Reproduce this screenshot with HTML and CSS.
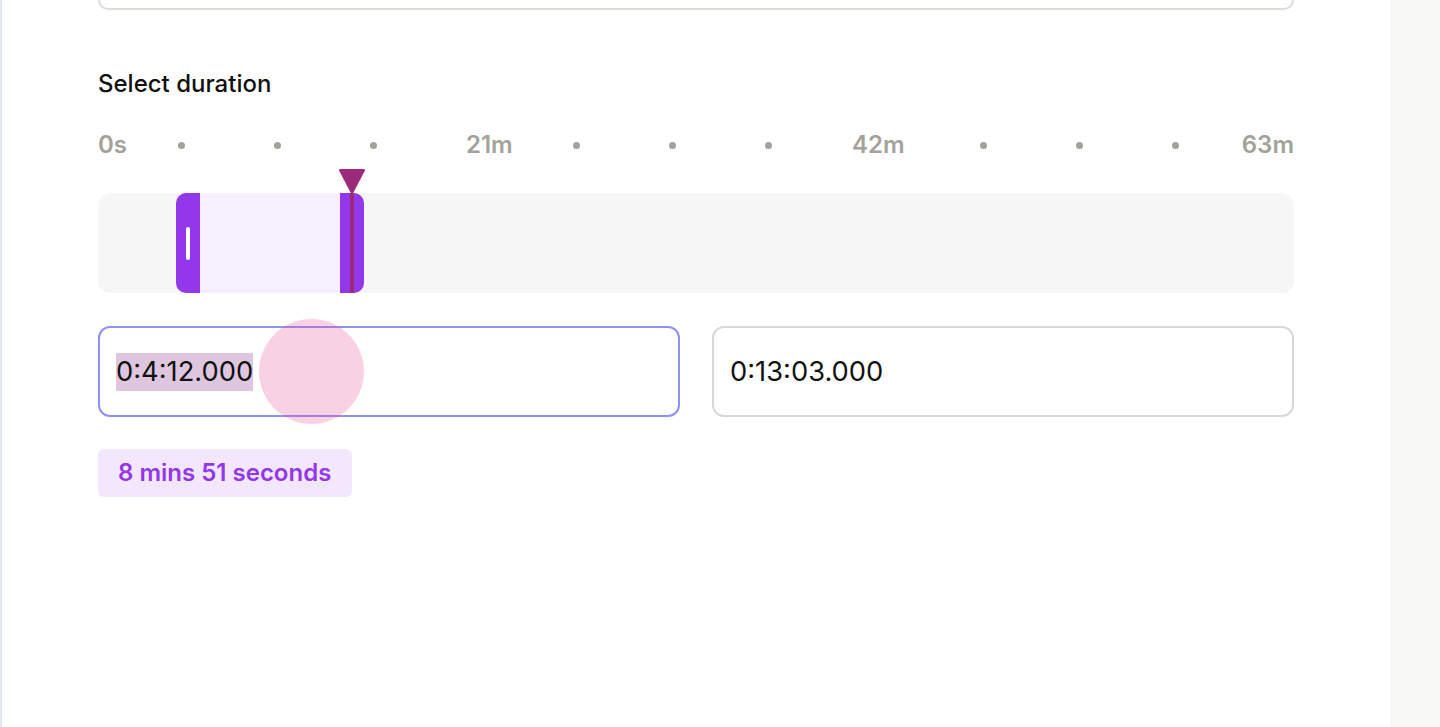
FILE: index.html
```html
<!DOCTYPE html>
<html>
<head>
<meta charset="utf-8">
<link rel="stylesheet" href="styles.css">
</head>
<body>
<div class="app">
  <div class="edge"></div>
  <main class="panel">
    <div class="prev-box"></div>
    <h2 class="title">Select duration</h2>
    <div class="ticks">
      <span class="lbl">0s</span>
      <span class="dot"></span>
      <span class="dot"></span>
      <span class="dot"></span>
      <span class="lbl">21m</span>
      <span class="dot"></span>
      <span class="dot"></span>
      <span class="dot"></span>
      <span class="lbl">42m</span>
      <span class="dot"></span>
      <span class="dot"></span>
      <span class="dot"></span>
      <span class="lbl end">63m</span>
    </div>
    <div class="track">
      <div class="range">
        <div class="handle left"><span class="grip"></span></div>
        <div class="fill"></div>
        <div class="handle right"></div>
      </div>
      <div class="playhead">
        <svg class="ph-head" width="30" height="28" viewBox="0 0 30 28"><path d="M3.5 1 H26.5 Q29 1 27.6 3.2 L16.2 25 Q15 27 13.8 25 L2.4 3.2 Q1 1 3.5 1 Z" fill="#9c2a7b"/></svg>
        <div class="ph-line"></div>
      </div>
    </div>
    <div class="inputs">
      <div class="field focused">
        <span class="val sel">0:4:12.000</span>
        <span class="touch"></span>
      </div>
      <div class="field">
        <span class="val">0:13:03.000</span>
      </div>
    </div>
    <div class="badge">8 mins 51 seconds</div>
  </main>
  <aside class="side"></aside>
</div>
</body>
</html>
```

FILE: styles.css
```css
* { box-sizing: border-box; }
html, body { margin: 0; padding: 0; height: 100%; }
body {
  font-family: Inter, "Noto Sans", sans-serif;
  background: #ffffff;
  overflow: hidden;
}
.app {
  display: flex;
  height: 727px;
}
.edge {
  width: 2px;
  background: #dfe6f2;
  flex: none;
}
.panel {
  width: 1388px;
  flex: none;
  background: #fff;
  padding: 0 96px;
}
.side {
  flex: 1;
  background: #f8f8f7;
}
.prev-box {
  height: 10px;
  border: 2px solid #dcdcd6;
  border-top: none;
  border-radius: 0 0 12px 12px;
}
.title {
  margin: 60px 0 0;
  font-size: 24px;
  line-height: 28px;
  font-weight: 500;
  color: #111;
  letter-spacing: 0;
}
.ticks {
  margin-top: 35px;
  display: grid;
  grid-template-columns: 80px 96px 96px 96px 107px 96px 96px 87px 128px 96px 96px 71px 51px;
  align-items: center;
  height: 24px;
}
.lbl {
  font-size: 24px;
  font-weight: 600;
  color: #a2a29b;
  line-height: 24px;
  white-space: nowrap;
}
.lbl.end { justify-self: end; }
.dot {
  width: 7px;
  height: 7px;
  border-radius: 50%;
  background: #a2a29b;
}
.track {
  position: relative;
  margin-top: 36px;
  height: 100px;
  background: #f6f6f6;
  border-radius: 12px;
}
.range {
  position: absolute;
  left: 78px;
  top: 0;
  width: 188px;
  height: 100px;
  display: flex;
}
.handle {
  width: 24px;
  background: #9337ea;
  flex: none;
  display: flex;
  align-items: center;
}
.handle.left { border-radius: 10px 0 0 10px; }
.handle.right { border-radius: 0 10px 10px 0; }
.grip {
  width: 4px;
  height: 33px;
  margin-left: 10px;
  background: #fff;
  border-radius: 2px;
}
.fill {
  flex: 1;
  background: #f6effd;
}
.playhead {
  position: absolute;
  left: 239px;
  top: -25px;
  width: 30px;
  height: 125px;
  display: flex;
  flex-direction: column;
  align-items: center;
}
.ph-head { display: block; flex: none; }
.ph-line {
  width: 4px;
  flex: 1;
  margin-top: -3px;
  background: #9c2a7b;
}
.inputs {
  margin-top: 33px;
  display: grid;
  grid-template-columns: 1fr 1fr;
  gap: 32px;
}
.field {
  position: relative;
  height: 91px;
  border: 2px solid #d8d8d8;
  border-radius: 12px;
  display: flex;
  align-items: center;
  padding-left: 16px;
}
.field.focused { border-color: #8f90f3; }
.val {
  font-size: 27.3px;
  line-height: 38px;
  color: #111;
  font-weight: 400;
}
.val.sel { background: #dfc6df; }
.touch {
  position: absolute;
  left: 159px;
  top: -9px;
  width: 105px;
  height: 105px;
  border-radius: 50%;
  background: rgba(232, 78, 150, 0.26);
}
.badge {
  margin-top: 32px;
  display: inline-block;
  height: 48px;
  line-height: 48px;
  padding: 0 21px 0 20px;
  background: #f3e7fd;
  color: #9337ea;
  border-radius: 6px;
  font-size: 24px;
  font-weight: 600;
}
```
